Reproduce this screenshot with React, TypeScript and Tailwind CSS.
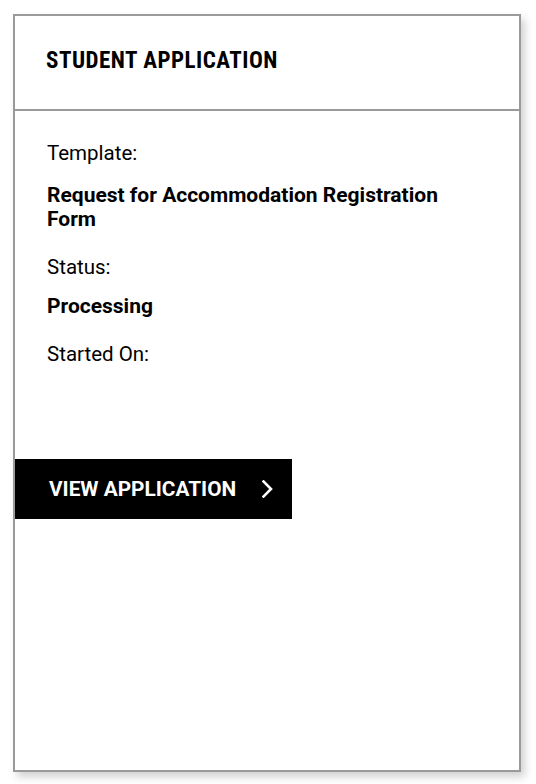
import React from "react";

export default function App() {
  return (
    <div className="w-[536px] h-[784px] bg-white relative" style={{ fontFamily: "Roboto, 'Liberation Sans', sans-serif" }}>
      <div className="pt-[14px] pl-[13px]">
        <div className="w-[508px] h-[758px] border-2 border-[#9a9a9a] bg-white shadow-[4px_5px_8px_rgba(0,0,0,0.18)] flex flex-col">
          <div className="h-[95px] shrink-0 border-b-2 border-[#9a9a9a] flex items-center pl-[31px]">
            <h1 className="text-[23px] font-bold text-black font-stretch-condensed tracking-[0.5px] leading-none mt-[-4px]">
              STUDENT APPLICATION
            </h1>
          </div>
          <div className="pt-[30px] pl-[32px] w-[445px] text-[20.5px] leading-[24px] text-black">
            <div>Template:</div>
            <div className="font-bold text-[21px] mt-[18px]">Request for Accommodation Registration Form</div>
            <div className="mt-[24px]">Status:</div>
            <div className="font-bold text-[21px] mt-[15px]">Processing</div>
            <div className="mt-[24px]">Started On:</div>
          </div>
          <div className="mt-[93px]">
            <button className="h-[60px] w-[277px] bg-black text-white flex items-center pl-[34px] gap-[26px]">
              <span className="text-[20.8px] font-bold leading-none">VIEW APPLICATION</span>
              <svg width="12" height="18" viewBox="0 0 12 18" fill="none">
                <path d="M1.5 1.5l7.5 7.5-7.5 7.5" stroke="white" strokeWidth="2.6" strokeLinecap="square" />
              </svg>
            </button>
          </div>
        </div>
      </div>
    </div>
  );
}
